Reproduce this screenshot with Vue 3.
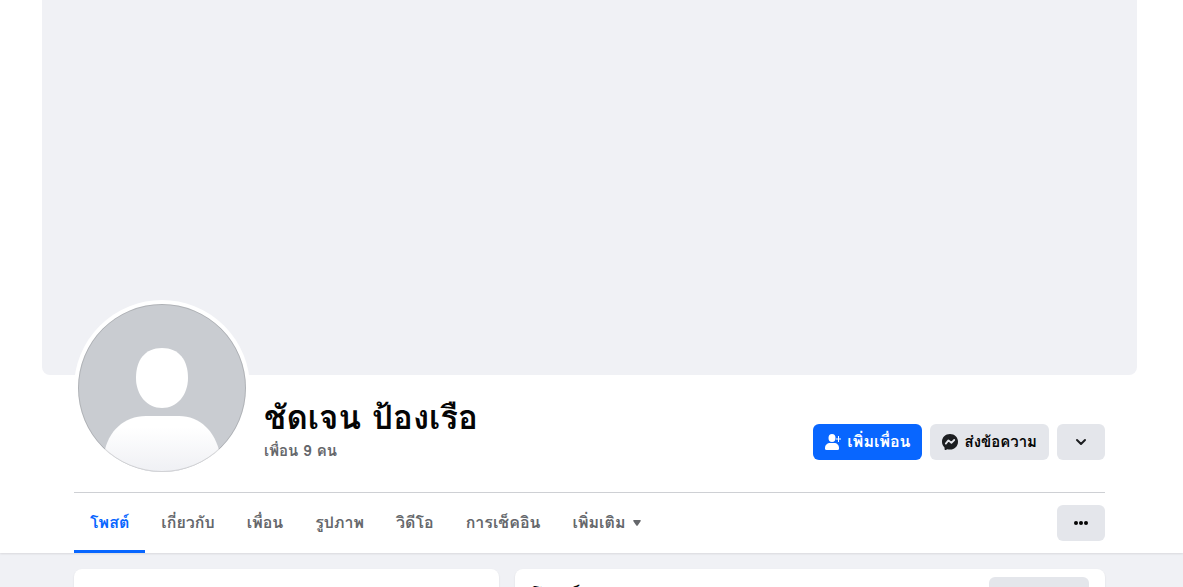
<script setup>
const tabs = ['โพสต์', 'เกี่ยวกับ', 'เพื่อน', 'รูปภาพ', 'วิดีโอ', 'การเช็คอิน']
</script>

<template>
  <div class="page">
    <header class="profile">
      <div class="wrap">
        <div class="cover"></div>
        <div class="inner">
          <div class="identity">
            <a class="avatar" href="#" aria-label="ชัดเจน ป้องเรือ">
              <svg viewBox="0 0 168 168" aria-hidden="true">
                <defs>
                  <linearGradient id="body-shade" x1="0" y1="0" x2="0" y2="1">
                    <stop offset="0.2" stop-color="#fff" />
                    <stop offset="1" stop-color="#eff0f4" />
                  </linearGradient>
                  <clipPath id="disc"><circle cx="84" cy="84" r="84" /></clipPath>
                </defs>
                <g clip-path="url(#disc)">
                  <rect width="168" height="168" fill="#c9ccd1" />
                  <path d="M84 44C101 44 110 56 110 74C110 91 99 104 84 104C69 104 58 91 58 74C58 56 67 44 84 44Z" fill="#fff" />
                  <path d="M26 150C30 127 46 112 68 112H101C122 112 137 127 142 150V168H26Z" fill="url(#body-shade)" />
                </g>
                <circle cx="84" cy="84" r="83.5" fill="none" stroke="#000" stroke-opacity="0.13" />
              </svg>
            </a>
            <div class="who">
              <h1>ชัดเจน ป้องเรือ</h1>
              <a class="count" href="#">เพื่อน 9 คน</a>
            </div>
            <div class="actions">
              <button class="btn primary" type="button">
                <svg width="16" height="16" viewBox="0 0 16 16" fill="#fff" aria-hidden="true">
                  <ellipse cx="7" cy="4" rx="3.500" ry="4" />
                  <path d="M0 14C0 11 2.300 9 5.200 9H9C12 9 14 11 14 14V14.500Q14 16 12.500 16H1.500Q0 16 0 14.500Z" />
                  <path d="M13 2h1v2.500h2v1h-2v2.500h-1v-2.500h-2v-1h2z" />
                </svg>
                <span>เพิ่มเพื่อน</span>
              </button>
              <button class="btn" type="button">
                <svg width="16" height="16" viewBox="0 0 16 16" aria-hidden="true">
                  <path d="M8 0C3.400 0 0 3.300 0 7.700C0 10 1 12 2.500 13.400L2.600 15.300C2.600 15.900 3.200 16.200 3.700 16L5.400 15.200C6.200 15.400 7.100 15.500 8 15.500C12.600 15.500 16 12.200 16 7.700C16 3.300 12.600 0 8 0Z" fill="#1c1e21" />
                  <path d="M3.800 9.600L6.400 6.400L9.400 8.800L12.200 6" fill="none" stroke="#e4e6eb" stroke-width="1.800" stroke-linecap="round" stroke-linejoin="round" />
                </svg>
                <span>ส่งข้อความ</span>
              </button>
              <button class="btn square" type="button" aria-label="ดูเพิ่มเติม">
                <svg width="16" height="16" viewBox="0 0 16 16" aria-hidden="true">
                  <path d="M4 6L8 10L12 6" fill="none" stroke="#1c1e21" stroke-width="2" stroke-linecap="round" stroke-linejoin="round" />
                </svg>
              </button>
            </div>
          </div>
          <div class="bar">
            <nav>
              <a v-for="(tab, i) in tabs" :key="tab" href="#" class="tab" :class="{ active: i === 0 }">{{ tab }}</a>
              <a href="#" class="tab more">เพิ่มเติม
                <svg width="8" height="6" viewBox="0 0 8 6" aria-hidden="true">
                  <path d="M1 0H7Q8.500 0 7.600 1.200L4.700 5.400Q4 6.300 3.300 5.400L0.400 1.200Q-.5 0 1 0Z" fill="#65676b" />
                </svg>
              </a>
            </nav>
            <button class="btn square" type="button" aria-label="ตัวเลือก">
              <svg width="16" height="16" viewBox="0 0 16 16" fill="#050505" aria-hidden="true">
                <circle cx="3" cy="8" r="2" /><circle cx="8" cy="8" r="2" /><circle cx="13" cy="8" r="2" />
              </svg>
            </button>
          </div>
        </div>
      </div>
    </header>
    <main class="wrap">
      <div class="inner columns">
        <section class="card"></section>
        <section class="card feed">
          <h2>โพสต์</h2>
          <button class="btn filter" type="button" aria-label="ตัวกรอง"></button>
        </section>
      </div>
    </main>
  </div>
</template>

<style>
body { margin: 0; overflow: hidden; background: #f0f2f5; }
</style>

<style scoped>
.page {
  height: 100vh;
  overflow: hidden;
  background: #f0f1f5;
  font-family: Tahoma, Waree, Loma, "Noto Sans", sans-serif;
  font-size: 15px;
  color: #050505;
}
.profile { background: #fff; box-shadow: 0 1px 2px rgba(0, 0, 0, 0.1); }
.wrap { margin: 0 46px 0 42px; }
.cover { height: 375px; border-radius: 0 0 8px 8px; background: #f0f1f5; }
.inner { margin: 0 32px; }
.identity { display: flex; align-items: flex-end; height: 117px; border-bottom: 1px solid #ced0d4; }
.avatar {
  position: relative;
  flex: none;
  width: 168px;
  height: 168px;
  margin-bottom: 16px;
  border: 4px solid #fff;
  border-radius: 50%;
  background: #fff;
}
.avatar svg { display: block; width: 100%; height: 100%; }
.who { flex: 1; margin: 0 0 31px 14px; }
h1 { margin: 0; font-size: 33px; line-height: 38px; font-weight: 700; color: #050505; white-space: nowrap; }
.count { display: block; margin-top: 4px; line-height: 20px; font-weight: 600; color: #65676b; text-decoration: none; }
.actions { display: flex; gap: 8px; margin-bottom: 32px; }
.btn {
  display: flex;
  align-items: center;
  justify-content: center;
  gap: 6px;
  height: 36px;
  padding: 0 12px;
  border: 0;
  border-radius: 6px;
  background: #e4e6eb;
  color: #050505;
  font: inherit;
  font-weight: 600;
  line-height: 20px;
  white-space: nowrap;
}
.primary { background: #0866ff; color: #fff; font-size: 16px; }
.square { width: 48px; }
.bar { display: flex; align-items: center; justify-content: space-between; height: 60px; }
nav { display: flex; height: 60px; }
.tab {
  display: flex;
  align-items: center;
  gap: 8px;
  padding: 0 16px;
  border-bottom: 3px solid transparent;
  border-top: 3px solid transparent;
  box-sizing: border-box;
  font-size: 16px;
  font-weight: 600;
  line-height: 20px;
  color: #65676b;
  text-decoration: none;
}
.active { color: #0866ff; border-bottom-color: #0866ff; }
.columns { display: grid; grid-template-columns: 425fr 590fr; gap: 16px; padding-top: 16px; }
.card { min-height: 60px; border-radius: 8px; background: #fff; box-shadow: 0 1px 2px rgba(0, 0, 0, 0.1); }
.feed { display: flex; justify-content: space-between; align-items: flex-start; padding: 8px 16px; box-sizing: border-box; }
h2 { margin: 4px 0; font-size: 20px; line-height: 28px; }
.filter { width: 100px; }
</style>
